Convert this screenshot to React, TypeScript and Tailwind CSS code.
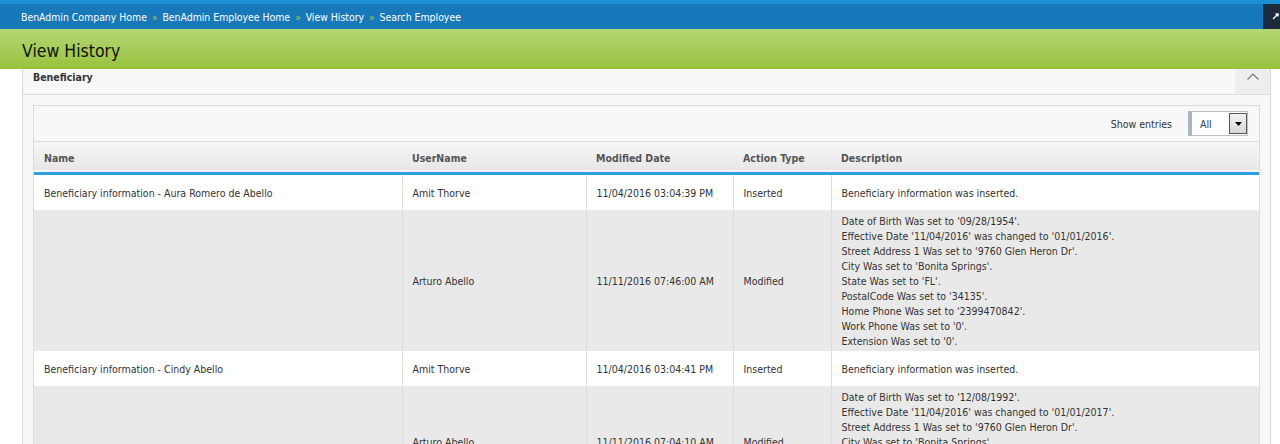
import React from "react";

const font = { fontFamily: '"DejaVu Sans Condensed", "DejaVu Sans", Tahoma, sans-serif' };

type Row = {
  name: string;
  user: string;
  date: string;
  action: string;
  desc: string[];
  alt?: boolean;
};

const rows: Row[] = [
  {
    name: "Beneficiary information - Aura Romero de Abello",
    user: "Amit Thorve",
    date: "11/04/2016 03:04:39 PM",
    action: "Inserted",
    desc: ["Beneficiary information was inserted."],
  },
  {
    name: "",
    user: "Arturo Abello",
    date: "11/11/2016 07:46:00 AM",
    action: "Modified",
    alt: true,
    desc: [
      "Date of Birth Was set to '09/28/1954'.",
      "Effective Date '11/04/2016' was changed to '01/01/2016'.",
      "Street Address 1 Was set to '9760 Glen Heron Dr'.",
      "City Was set to 'Bonita Springs'.",
      "State Was set to 'FL'.",
      "PostalCode Was set to '34135'.",
      "Home Phone Was set to '2399470842'.",
      "Work Phone Was set to '0'.",
      "Extension Was set to '0'.",
    ],
  },
  {
    name: "Beneficiary information - Cindy Abello",
    user: "Amit Thorve",
    date: "11/04/2016 03:04:41 PM",
    action: "Inserted",
    desc: ["Beneficiary information was inserted."],
  },
  {
    name: "",
    user: "Arturo Abello",
    date: "11/11/2016 07:04:10 AM",
    action: "Modified",
    alt: true,
    desc: [
      "Date of Birth Was set to '12/08/1992'.",
      "Effective Date '11/04/2016' was changed to '01/01/2017'.",
      "Street Address 1 Was set to '9760 Glen Heron Dr'.",
      "City Was set to 'Bonita Springs'.",
      "State Was set to 'FL'.",
      "PostalCode Was set to '34135'.",
      "Home Phone Was set to '2399470842'.",
    ],
  },
];

const Crumb = ({ children, last }: { children: React.ReactNode; last?: boolean }) => (
  <>
    <span>{children}</span>
    {!last && <span className="mx-[5px] text-[#a8cf45] text-[10px]">»</span>}
  </>
);

export default function App() {
  return (
    <div className="w-[1280px] min-h-[444px] bg-white text-[#333]" style={font}>
      {/* top bar */}
      <div className="h-[4px] bg-[#1b8fd6]" />
      <div className="flex h-[25px] bg-[#1779b9]">
        <div className="flex flex-1 items-center pl-[21px] pt-[2px] text-[10.4px] text-white">
          <Crumb>BenAdmin Company Home</Crumb>
          <Crumb>BenAdmin Employee Home</Crumb>
          <Crumb>View History</Crumb>
          <Crumb last>Search Employee</Crumb>
        </div>
        <div className="w-[17px] bg-[#1b2a3d] flex items-start justify-end pt-[9px] pr-[1px]">
          <svg width="7" height="7" viewBox="0 0 7 7">
            <path d="M1 6 L6 1 M3.5 1 H6 V3.5" stroke="#fff" strokeWidth="1.4" fill="none" />
          </svg>
        </div>
      </div>

      {/* title */}
      <div className="h-[40px] bg-gradient-to-b from-[#b3d672] to-[#98c23c] flex items-center pl-[22px] pt-[5px]">
        <h1 className="text-[17.5px] text-[#111]">View History</h1>
      </div>

      {/* panel */}
      <div className="ml-[22px] w-[1249px] border-x border-[#d9d9d9] bg-[#f8f8f8]">
        <div className="flex h-[26px] border-b border-[#dcdcdc]">
          <div className="flex-1 pl-[10px] pt-[1px] text-[10.5px] font-bold text-[#333]">Beneficiary</div>
          <div className="w-[35px] bg-[#eeeeee] flex justify-center pt-[3px]">
            <svg width="14" height="10" viewBox="0 0 14 10">
              <path d="M1.5 7.5 L7 2 L12.5 7.5" stroke="#777" strokeWidth="1.2" fill="none" />
            </svg>
          </div>
        </div>

        <div className="px-[10px] pt-[10px]">
          <div className="border border-[#dcdcdc] border-b-0 bg-white">
            <div className="h-[36px] bg-[#f8f8f8] flex items-center justify-end pr-[11px] border-b border-[#dcdcdc]">
              <span className="text-[10.5px] text-[#333] mr-[16px] pt-[2px]">Show entries</span>
              <div className="flex h-[25px] w-[60px] border border-[#b9c3cc] border-l-[4px] border-l-[#a9b5c0] bg-white">
                <span className="flex-1 pl-[8px] text-[10.5px] text-[#2b3a5c] leading-[25px]">All</span>
                <div className="w-[18px] m-[1px] mr-0 border border-[#555] bg-gradient-to-b from-[#f2f2f2] to-[#d6d6d6] flex items-center justify-center">
                  <svg width="7" height="4" viewBox="0 0 7 4">
                    <path d="M0 0 H7 L3.5 4 Z" fill="#000" />
                  </svg>
                </div>
              </div>
            </div>

            <table className="w-full border-collapse text-[10.5px] leading-[15px] table-fixed">
              <colgroup>
                <col className="w-[368px]" />
                <col className="w-[184px]" />
                <col className="w-[147px]" />
                <col className="w-[98px]" />
                <col />
              </colgroup>
              <thead>
                <tr className="bg-gradient-to-b from-[#f7f7f7] to-[#e7e7e7] border-b-[3px] border-[#2f9de2]">
                  {["Name", "UserName", "Modified Date", "Action Type", "Description"].map((h) => (
                    <th key={h} className="h-[31px] text-left font-bold text-[#555] px-[10px] pt-[3px] align-middle">
                      {h}
                    </th>
                  ))}
                </tr>
              </thead>
              <tbody>
                {rows.map((r, i) => (
                  <tr key={i} className={r.alt ? "bg-[#e9e9e9]" : "bg-white"}>
                    <td className="px-[10px] pt-[11px] pb-[9px] align-middle">{r.name}</td>
                    <td className="px-[10px] pt-[11px] pb-[9px] align-middle border-l border-[#dcdcdc]">{r.user}</td>
                    <td className="px-[10px] pt-[11px] pb-[9px] align-middle border-l border-[#dcdcdc]">{r.date}</td>
                    <td className="px-[10px] pt-[11px] pb-[9px] align-middle border-l border-[#dcdcdc]">{r.action}</td>
                    <td
                      className={`px-[10px] align-middle border-l border-[#dcdcdc] ${
                        r.desc.length > 1 ? "pt-[4px] pb-[2px]" : "pt-[11px] pb-[9px]"
                      }`}
                    >
                      {r.desc.map((d, j) => (
                        <div key={j}>{d}</div>
                      ))}
                    </td>
                  </tr>
                ))}
              </tbody>
            </table>
          </div>
        </div>
      </div>
    </div>
  );
}
